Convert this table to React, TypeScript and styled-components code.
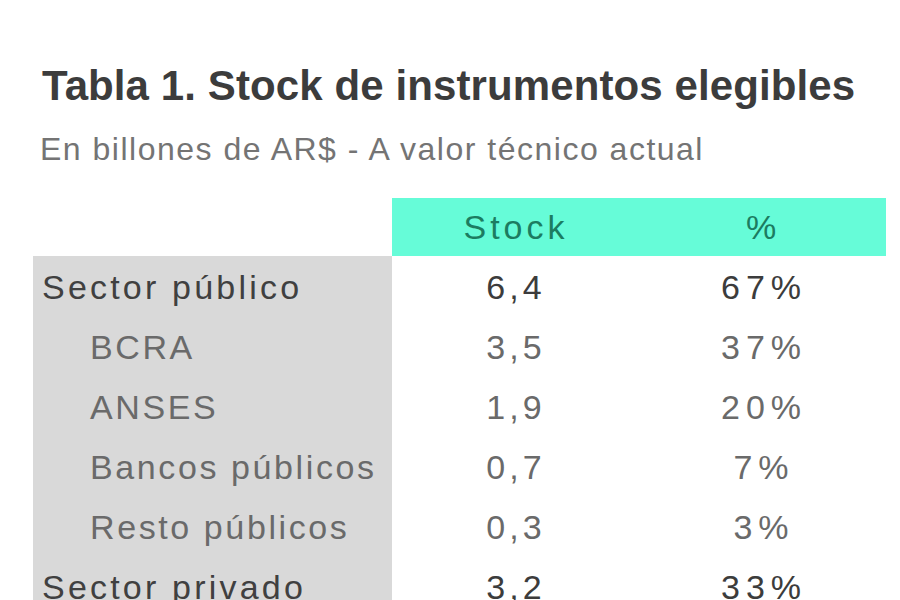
import React from "react";
import styled, { createGlobalStyle } from "styled-components";

const GlobalStyle = createGlobalStyle`
  html, body {
    margin: 0;
    padding: 0;
    background: #ffffff;
  }
  body {
    font-family: "Liberation Sans", Arial, sans-serif;
    width: 900px;
    height: 600px;
    overflow: hidden;
  }
`;

const Page = styled.div`
  width: 900px;
  height: 600px;
  padding-top: 62px;
  box-sizing: border-box;
  background: #fff;
`;

const Title = styled.h1`
  margin: 0 0 0 42px;
  font-size: 42px;
  font-weight: 700;
  letter-spacing: 0.1px;
  color: #3c3c3c;
  line-height: 48px;
  white-space: nowrap;
`;

const Subtitle = styled.div`
  margin: 19px 0 0 40px;
  font-size: 32px;
  font-weight: 400;
  letter-spacing: 1.5px;
  color: #747474;
  line-height: 40px;
  white-space: nowrap;
`;

const Table = styled.div`
  margin: 29px 0 0 33px;
  display: grid;
  grid-template-columns: 359px 244px 250px;
  grid-template-rows: 58px;
  grid-auto-rows: 60px;
`;

const HeadBlank = styled.div``;

const HeadCell = styled.div<{ $spacing: number }>`
  background: #66fcd8;
  color: #1c7c61;
  font-size: 34px;
  letter-spacing: ${(p) => p.$spacing}px;
  padding-left: ${(p) => p.$spacing}px;
  display: flex;
  align-items: center;
  justify-content: center;
`;

const LabelCell = styled.div<{ $indent?: boolean }>`
  background: #d9d9d9;
  display: flex;
  align-items: center;
  padding-left: ${(p) => (p.$indent ? "57px" : "9px")};
  padding-top: 2px;
  font-size: 34px;
  letter-spacing: ${(p) => (p.$indent ? "2.6px" : "3.2px")};
  color: ${(p) => (p.$indent ? "#6a6a6a" : "#404040")};
  white-space: nowrap;
`;

const ValueCell = styled.div<{ $strong?: boolean; $spacing: number }>`
  display: flex;
  align-items: center;
  justify-content: center;
  padding-top: 2px;
  padding-left: ${(p) => p.$spacing}px;
  font-size: 34px;
  letter-spacing: ${(p) => p.$spacing}px;
  color: ${(p) => (p.$strong ? "#3c3c3c" : "#6a6a6a")};
`;

const rows = [
  { label: "Sector público", stock: "6,4", pct: "67%", main: true },
  { label: "BCRA", stock: "3,5", pct: "37%", main: false },
  { label: "ANSES", stock: "1,9", pct: "20%", main: false },
  { label: "Bancos públicos", stock: "0,7", pct: "7%", main: false },
  { label: "Resto públicos", stock: "0,3", pct: "3%", main: false },
  { label: "Sector privado", stock: "3,2", pct: "33%", main: true },
];

export default function App() {
  return (
    <>
      <GlobalStyle />
      <Page>
        <Title>Tabla 1. Stock de instrumentos elegibles</Title>
        <Subtitle>En billones de AR$ - A valor técnico actual</Subtitle>
        <Table>
          <HeadBlank />
          <HeadCell $spacing={4}>Stock</HeadCell>
          <HeadCell $spacing={4}>%</HeadCell>
          {rows.map((r) => (
            <React.Fragment key={r.label}>
              <LabelCell $indent={!r.main}>{r.label}</LabelCell>
              <ValueCell $strong={r.main} $spacing={4}>
                {r.stock}
              </ValueCell>
              <ValueCell $strong={r.main} $spacing={6}>
                {r.pct}
              </ValueCell>
            </React.Fragment>
          ))}
        </Table>
      </Page>
    </>
  );
}
